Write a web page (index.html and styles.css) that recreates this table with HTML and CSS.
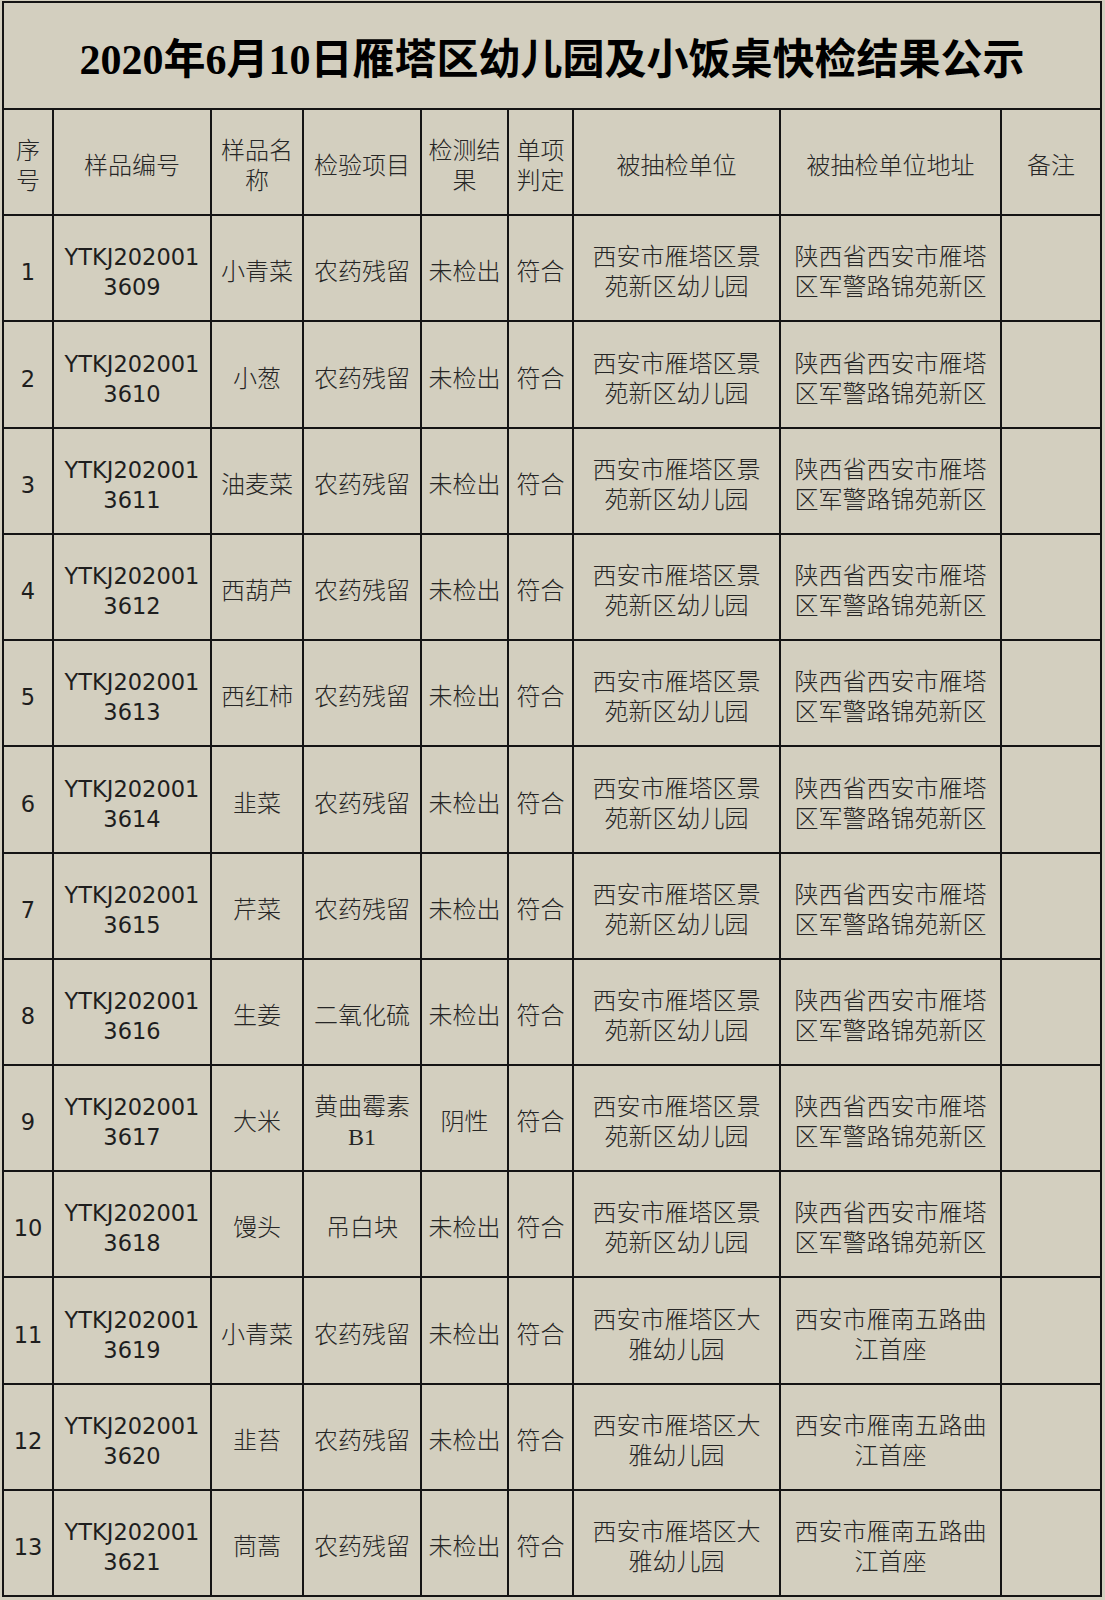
FILE: index.html
```html
<!DOCTYPE html>
<html lang="zh-CN">
<head>
<meta charset="utf-8">
<title>2020年6月10日雁塔区幼儿园及小饭桌快检结果公示</title>
<link rel="stylesheet" href="styles.css">
</head>
<body>
<table class="sheet">
  <colgroup>
    <col class="c-no"><col class="c-code"><col class="c-name"><col class="c-item"><col class="c-res"><col class="c-judge"><col class="c-unit"><col class="c-addr"><col class="c-note">
  </colgroup>
  <tbody>
    <tr class="r-title"><td colspan="9" class="title">2020年6月10日雁塔区幼儿园及小饭桌快检结果公示</td></tr>
    <tr class="r-head">
      <td class="cn">序<br>号</td><td class="cn">样品编号</td><td class="cn">样品名<br>称</td><td class="cn">检验项目</td><td class="cn">检测结<br>果</td><td class="cn">单项<br>判定</td><td class="cn">被抽检单位</td><td class="cn">被抽检单位地址</td><td class="cn">备注</td>
    </tr>
    <tr class="r-a"><td class="num">1</td><td class="num">YTKJ202001<br>3609</td><td class="cn">小青菜</td><td class="cn">农药残留</td><td class="cn">未检出</td><td class="cn">符合</td><td class="cn">西安市雁塔区景<br>苑新区幼儿园</td><td class="cn">陕西省西安市雁塔<br>区军警路锦苑新区</td><td class="cn"></td></tr>
    <tr class="r-b"><td class="num">2</td><td class="num">YTKJ202001<br>3610</td><td class="cn">小葱</td><td class="cn">农药残留</td><td class="cn">未检出</td><td class="cn">符合</td><td class="cn">西安市雁塔区景<br>苑新区幼儿园</td><td class="cn">陕西省西安市雁塔<br>区军警路锦苑新区</td><td class="cn"></td></tr>
    <tr class="r-a"><td class="num">3</td><td class="num">YTKJ202001<br>3611</td><td class="cn">油麦菜</td><td class="cn">农药残留</td><td class="cn">未检出</td><td class="cn">符合</td><td class="cn">西安市雁塔区景<br>苑新区幼儿园</td><td class="cn">陕西省西安市雁塔<br>区军警路锦苑新区</td><td class="cn"></td></tr>
    <tr class="r-a"><td class="num">4</td><td class="num">YTKJ202001<br>3612</td><td class="cn">西葫芦</td><td class="cn">农药残留</td><td class="cn">未检出</td><td class="cn">符合</td><td class="cn">西安市雁塔区景<br>苑新区幼儿园</td><td class="cn">陕西省西安市雁塔<br>区军警路锦苑新区</td><td class="cn"></td></tr>
    <tr class="r-a"><td class="num">5</td><td class="num">YTKJ202001<br>3613</td><td class="cn">西红柿</td><td class="cn">农药残留</td><td class="cn">未检出</td><td class="cn">符合</td><td class="cn">西安市雁塔区景<br>苑新区幼儿园</td><td class="cn">陕西省西安市雁塔<br>区军警路锦苑新区</td><td class="cn"></td></tr>
    <tr class="r-b"><td class="num">6</td><td class="num">YTKJ202001<br>3614</td><td class="cn">韭菜</td><td class="cn">农药残留</td><td class="cn">未检出</td><td class="cn">符合</td><td class="cn">西安市雁塔区景<br>苑新区幼儿园</td><td class="cn">陕西省西安市雁塔<br>区军警路锦苑新区</td><td class="cn"></td></tr>
    <tr class="r-a"><td class="num">7</td><td class="num">YTKJ202001<br>3615</td><td class="cn">芹菜</td><td class="cn">农药残留</td><td class="cn">未检出</td><td class="cn">符合</td><td class="cn">西安市雁塔区景<br>苑新区幼儿园</td><td class="cn">陕西省西安市雁塔<br>区军警路锦苑新区</td><td class="cn"></td></tr>
    <tr class="r-a"><td class="num">8</td><td class="num">YTKJ202001<br>3616</td><td class="cn">生姜</td><td class="cn">二氧化硫</td><td class="cn">未检出</td><td class="cn">符合</td><td class="cn">西安市雁塔区景<br>苑新区幼儿园</td><td class="cn">陕西省西安市雁塔<br>区军警路锦苑新区</td><td class="cn"></td></tr>
    <tr class="r-a"><td class="num">9</td><td class="num">YTKJ202001<br>3617</td><td class="cn">大米</td><td class="cn">黄曲霉素<br>B1</td><td class="cn">阴性</td><td class="cn">符合</td><td class="cn">西安市雁塔区景<br>苑新区幼儿园</td><td class="cn">陕西省西安市雁塔<br>区军警路锦苑新区</td><td class="cn"></td></tr>
    <tr class="r-a"><td class="num">10</td><td class="num">YTKJ202001<br>3618</td><td class="cn">馒头</td><td class="cn">吊白块</td><td class="cn">未检出</td><td class="cn">符合</td><td class="cn">西安市雁塔区景<br>苑新区幼儿园</td><td class="cn">陕西省西安市雁塔<br>区军警路锦苑新区</td><td class="cn"></td></tr>
    <tr class="r-b"><td class="num">11</td><td class="num">YTKJ202001<br>3619</td><td class="cn">小青菜</td><td class="cn">农药残留</td><td class="cn">未检出</td><td class="cn">符合</td><td class="cn">西安市雁塔区大<br>雅幼儿园</td><td class="cn">西安市雁南五路曲<br>江首座</td><td class="cn"></td></tr>
    <tr class="r-a"><td class="num">12</td><td class="num">YTKJ202001<br>3620</td><td class="cn">韭苔</td><td class="cn">农药残留</td><td class="cn">未检出</td><td class="cn">符合</td><td class="cn">西安市雁塔区大<br>雅幼儿园</td><td class="cn">西安市雁南五路曲<br>江首座</td><td class="cn"></td></tr>
    <tr class="r-a"><td class="num">13</td><td class="num">YTKJ202001<br>3621</td><td class="cn">茼蒿</td><td class="cn">农药残留</td><td class="cn">未检出</td><td class="cn">符合</td><td class="cn">西安市雁塔区大<br>雅幼儿园</td><td class="cn">西安市雁南五路曲<br>江首座</td><td class="cn"></td></tr>
  </tbody>
</table>
</body>
</html>
```

FILE: styles.css
```css
html, body {
  margin: 0;
  background: #d3cfbf;
}
body {
  padding: 1px 0 0 2px;
}
.sheet {
  border-collapse: separate;
  border-spacing: 2px;
  background: #141414;
  table-layout: fixed;
  width: 1100px;
}
.c-no { width: 48px; }
.c-code { width: 156px; }
.c-name { width: 90px; }
.c-item { width: 116px; }
.c-res { width: 85px; }
.c-judge { width: 63px; }
.c-unit { width: 205px; }
.c-addr { width: 219px; }
.c-note { width: 98px; }

.sheet td {
  background: #d3cfbf;
  padding: 8px 0 0 0;
  text-align: center;
  vertical-align: middle;
  white-space: nowrap;
  overflow: hidden;
  box-sizing: border-box;
}
.r-title { height: 105px; }
.r-head { height: 104px; }
.r-a { height: 104px; }
.r-b { height: 105px; }

.sheet td.title {
  padding: 8px 0 0 0;
  font-family: "Liberation Serif", "Noto Sans CJK SC", serif;
  font-weight: bold;
  font-size: 42px;
  line-height: 48px;
  color: #000;
}
.cn {
  font-family: "Liberation Serif", "Noto Sans CJK SC", serif;
  font-weight: 300;
  font-size: 24px;
  line-height: 30px;
  color: #262626;
}
.num {
  font-family: "DejaVu Sans", "Liberation Sans", sans-serif;
  font-size: 22.5px;
  line-height: 30px;
  color: #1e1e1e;
}
```
